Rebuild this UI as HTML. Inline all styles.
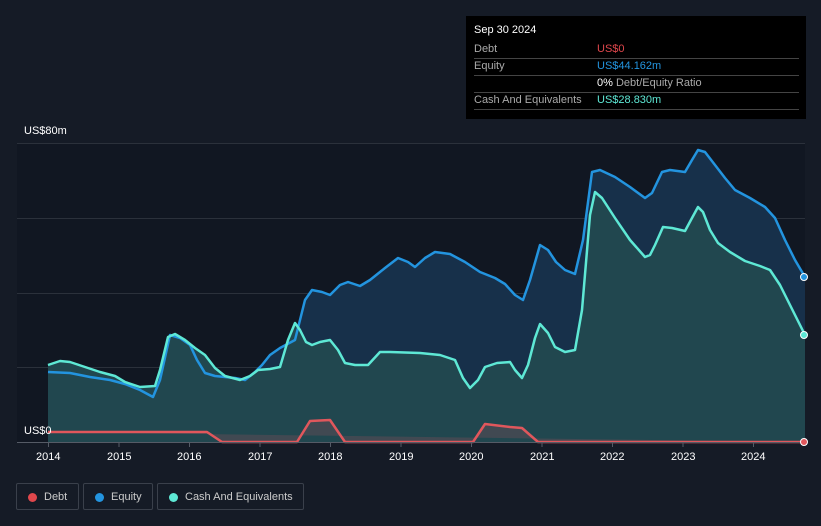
<!DOCTYPE html><html><head><style>
body{margin:0;width:821px;height:526px;background:#151b26;font-family:"Liberation Sans",sans-serif;overflow:hidden;position:relative}
.tt{position:absolute;left:466px;top:16px;width:340px;height:103px;background:#000;color:#fff;font-size:11px}
.tt .r{position:absolute;left:8px;width:325px;border-bottom:1px solid #444;height:17px;line-height:17px}
.lab{color:#aaa}
.v{position:absolute;left:123px;top:0}
.lg{position:absolute;top:483px;height:27px;border:1px solid #3a404b;border-radius:2px;color:#ccc;font-size:11px;line-height:27px;box-sizing:border-box}
.lg i{position:absolute;left:11px;top:9px;width:9px;height:9px;border-radius:50%}
.lg span{position:absolute;left:27px}
.ax{position:absolute;color:#fff;font-size:11px}
</style></head><body>
<svg width="821" height="526" style="position:absolute;left:0;top:0">
<rect x="17" y="143" width="788" height="299" fill="#111722"/>
<g stroke="#2b313b" stroke-width="1">
<line x1="17" y1="143.5" x2="805" y2="143.5"/><line x1="17" y1="218.5" x2="805" y2="218.5"/><line x1="17" y1="293.5" x2="805" y2="293.5"/><line x1="17" y1="367.5" x2="805" y2="367.5"/>
</g>
<path id="eq" d="M48,372 70,373 90,377 110,380 125,384 140,390 153,397 160,380 170,335 180,338 190,345 197,360 205,373 215,376 235,378 245,380 255,372 262,365 270,355 280,348 295,340 305,300 312,290 322,292 330,295 340,285 348,282 360,286 370,280 385,268 398,258 408,262 415,267 425,258 435,252 450,254 465,262 480,272 495,278 505,284 515,295 523,300 530,280 540,245 548,250 556,262 565,270 575,274 583,240 592,172 600,170 615,177 630,187 645,198 652,193 662,172 670,170 685,172 692,160 698,150 705,152 715,165 725,178 735,190 750,198 765,207 775,218 785,240 795,260 805,277" fill="none"/>
<path d="M48,372 70,373 90,377 110,380 125,384 140,390 153,397 160,380 170,335 180,338 190,345 197,360 205,373 215,376 235,378 245,380 255,372 262,365 270,355 280,348 295,340 305,300 312,290 322,292 330,295 340,285 348,282 360,286 370,280 385,268 398,258 408,262 415,267 425,258 435,252 450,254 465,262 480,272 495,278 505,284 515,295 523,300 530,280 540,245 548,250 556,262 565,270 575,274 583,240 592,172 600,170 615,177 630,187 645,198 652,193 662,172 670,170 685,172 692,160 698,150 705,152 715,165 725,178 735,190 750,198 765,207 775,218 785,240 795,260 805,277 805,442 48,442Z" fill="#17304a"/>
<path d="M48,365 60,361 70,362 85,367 100,372 115,376 125,382 140,387 155,386 160,370 168,337 175,334 185,340 195,348 205,355 215,368 225,376 240,380 250,376 258,370 270,369 280,367 288,340 295,323 300,330 306,342 312,345 320,342 330,340 338,350 345,363 355,365 368,365 380,352 390,352 420,353 440,355 455,360 463,378 470,388 478,380 485,367 497,363 510,362 515,370 522,378 528,365 535,338 540,324 548,333 555,347 565,352 575,350 582,310 590,215 595,192 602,198 615,218 630,240 645,257 650,255 655,245 663,227 672,228 685,231 692,218 698,207 703,212 710,230 718,243 730,252 745,261 760,266 770,270 780,285 790,305 805,335 805,442 48,442Z" fill="#21474f"/>
<path d="M48,432 207,432 222,442 297,442 310,421 330,420 345,442 473,442 485,424 510,427 522,428 538,442 805,442Z" fill="#4a4a52" opacity="0.8"/>
<g fill="none" stroke-width="2.5" stroke-linejoin="round">
<path d="M48,372 70,373 90,377 110,380 125,384 140,390 153,397 160,380 170,335 180,338 190,345 197,360 205,373 215,376 235,378 245,380 255,372 262,365 270,355 280,348 295,340 305,300 312,290 322,292 330,295 340,285 348,282 360,286 370,280 385,268 398,258 408,262 415,267 425,258 435,252 450,254 465,262 480,272 495,278 505,284 515,295 523,300 530,280 540,245 548,250 556,262 565,270 575,274 583,240 592,172 600,170 615,177 630,187 645,198 652,193 662,172 670,170 685,172 692,160 698,150 705,152 715,165 725,178 735,190 750,198 765,207 775,218 785,240 795,260 805,277" stroke="#2394df"/>
<path d="M48,365 60,361 70,362 85,367 100,372 115,376 125,382 140,387 155,386 160,370 168,337 175,334 185,340 195,348 205,355 215,368 225,376 240,380 250,376 258,370 270,369 280,367 288,340 295,323 300,330 306,342 312,345 320,342 330,340 338,350 345,363 355,365 368,365 380,352 390,352 420,353 440,355 455,360 463,378 470,388 478,380 485,367 497,363 510,362 515,370 522,378 528,365 535,338 540,324 548,333 555,347 565,352 575,350 582,310 590,215 595,192 602,198 615,218 630,240 645,257 650,255 655,245 663,227 672,228 685,231 692,218 698,207 703,212 710,230 718,243 730,252 745,261 760,266 770,270 780,285 790,305 805,335" stroke="#5ee8d5"/>
<path d="M48,432 207,432 222,442 297,442 310,421 330,420 345,442 473,442 485,424 510,427 522,428 538,442 805,442" stroke="#e0575c"/>
</g>
<line x1="17" y1="442.5" x2="805" y2="442.5" stroke="#555b66"/>
<g stroke="#555b66"><line x1="48.5" y1="442" x2="48.5" y2="447"/><line x1="119" y1="442" x2="119" y2="447"/><line x1="189.5" y1="442" x2="189.5" y2="447"/><line x1="260" y1="442" x2="260" y2="447"/><line x1="330.5" y1="442" x2="330.5" y2="447"/><line x1="401" y1="442" x2="401" y2="447"/><line x1="471.5" y1="442" x2="471.5" y2="447"/><line x1="542" y1="442" x2="542" y2="447"/><line x1="612.5" y1="442" x2="612.5" y2="447"/><line x1="683" y1="442" x2="683" y2="447"/><line x1="753.5" y1="442" x2="753.5" y2="447"/></g>
<circle cx="804" cy="277" r="3.5" fill="#2394df" stroke="#fff" stroke-width="1"/>
<circle cx="804" cy="335" r="3.5" fill="#5ee8d5" stroke="#fff" stroke-width="1"/>
<circle cx="804" cy="442" r="3.5" fill="#e0575c" stroke="#fff" stroke-width="1"/>
</svg>
<div class="ax" style="left:24px;top:125px">US$80m</div>
<div class="ax" style="left:24px;top:425px">US$0</div>
<div class="ax" style="left:36px;top:451px">2014</div><div class="ax" style="left:107px;top:451px">2015</div><div class="ax" style="left:177px;top:451px">2016</div><div class="ax" style="left:248px;top:451px">2017</div><div class="ax" style="left:318px;top:451px">2018</div><div class="ax" style="left:389px;top:451px">2019</div><div class="ax" style="left:459px;top:451px">2020</div><div class="ax" style="left:530px;top:451px">2021</div><div class="ax" style="left:600px;top:451px">2022</div><div class="ax" style="left:671px;top:451px">2023</div><div class="ax" style="left:741px;top:451px">2024</div>
<div class="tt">
<div style="position:absolute;left:8px;top:8px;font-size:11px">Sep 30 2024</div>
<div class="r" style="top:25px"><span class="lab">Debt</span><span class="v" style="color:#e0474c">US$0</span></div>
<div class="r" style="top:42px;border:none"><span class="lab">Equity</span><span class="v" style="color:#2394df">US$44.162m</span></div>
<div class="r" style="top:59px;border-top:none"><span class="v"><b style="font-weight:normal;color:#fff">0%</b> <span class="lab">Debt/Equity Ratio</span></span></div>
<div style="position:absolute;left:8px;top:42px;width:325px;border-bottom:1px solid #444;height:17px"></div>
<div class="r" style="top:76px"><span class="lab">Cash And Equivalents</span><span class="v" style="color:#5ee8d5">US$28.830m</span></div>
</div>
<div class="lg" style="left:16px;width:63px"><i style="background:#e0474c"></i><span>Debt</span></div>
<div class="lg" style="left:83px;width:70px"><i style="background:#2394df"></i><span>Equity</span></div>
<div class="lg" style="left:157px;width:147px"><i style="background:#5ee8d5"></i><span>Cash And Equivalents</span></div>
</body></html>
